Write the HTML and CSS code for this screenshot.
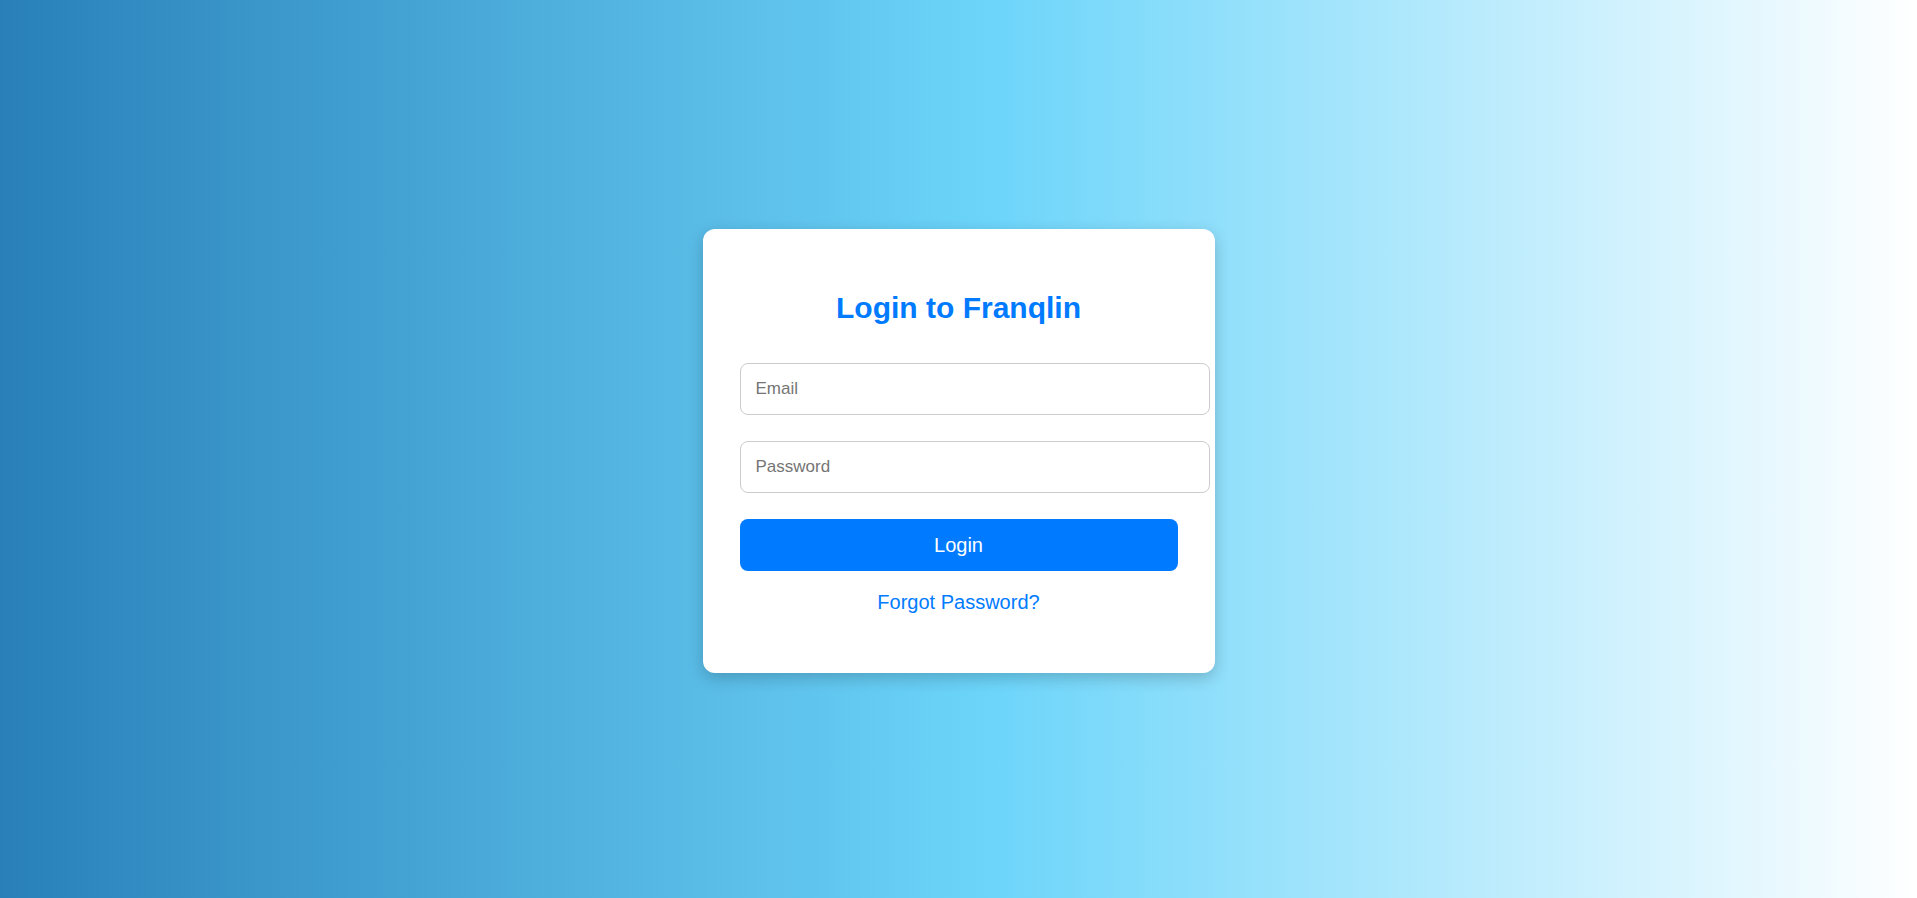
FILE: index.html
```html
<!DOCTYPE html>
<html lang="en">
<head>
<meta charset="utf-8">
<title>Login to Franqlin</title>
<link rel="stylesheet" href="styles.css">
</head>
<body>
<div class="card">
  <h2 class="title">Login to Franqlin</h2>
  <form class="form">
    <input class="field" type="email" placeholder="Email">
    <input class="field" type="password" placeholder="Password">
    <button class="btn" type="button">Login</button>
  </form>
  <p class="forgot"><a href="#">Forgot Password?</a></p>
</div>
</body>
</html>
```

FILE: styles.css
```css
html, body {
  margin: 0;
  padding: 0;
  height: 100%;
}
body {
  box-sizing: border-box;
  padding-top: 4px;
  font-family: "Liberation Sans", Arial, sans-serif;
  background: linear-gradient(to right, #2980b9, #6dd5fa 52%, #ffffff);
  display: flex;
  align-items: center;
  justify-content: center;
  min-height: 100vh;
}
.card {
  background: #ffffff;
  width: 438px;
  padding: 37px;
  border-radius: 12px;
  box-shadow: 0 5px 16px rgba(0, 0, 0, 0.2);
  text-align: center;
}
.title {
  margin: 25px 0 38px;
  font-size: 30px;
  line-height: 34px;
  font-weight: bold;
  color: #007bff;
}
.form {
  display: flex;
  flex-direction: column;
  align-items: flex-start;
  margin: 0;
}
.field {
  box-sizing: content-box;
  width: 100%;
  height: 20px;
  line-height: 20px;
  padding: 15px;
  margin: 0 0 26px;
  border: 1px solid #cccccc;
  border-radius: 8px;
  font-family: "Liberation Sans", Arial, sans-serif;
  font-size: 17px;
  color: #333;
  background: #fff;
  outline: none;
}
.field::placeholder {
  color: #757575;
}
.btn {
  box-sizing: border-box;
  width: 100%;
  height: 52px;
  border: none;
  border-radius: 8px;
  background: #007bff;
  color: #ffffff;
  font-family: "Liberation Sans", Arial, sans-serif;
  font-size: 20px;
  cursor: pointer;
}
.forgot {
  margin: 20px 0 22px;
  font-size: 20px;
  line-height: 23px;
}
.forgot a {
  color: #007bff;
  text-decoration: none;
}
```
